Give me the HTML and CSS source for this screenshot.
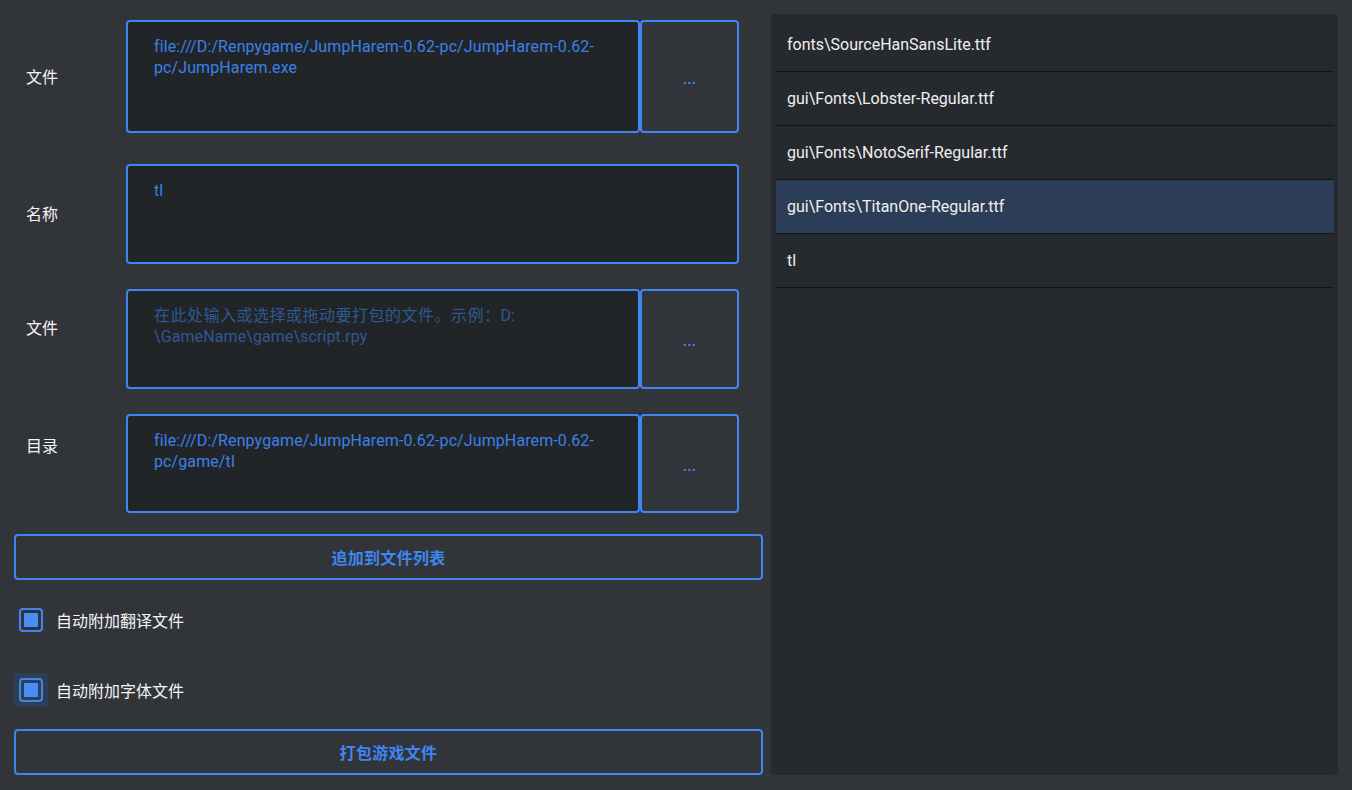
FILE: index.html
```html
<!DOCTYPE html>
<html lang="zh">
<head>
<meta charset="utf-8">
<title>打包</title>
<link rel="stylesheet" href="styles.css">
</head>
<body>
<div class="app">
  <div class="left">
    <div class="row row1">
      <div class="label lab1">文件</div>
      <div class="field tall">file:///D:/Renpygame/JumpHarem-0.62-pc/JumpHarem-0.62-pc/JumpHarem.exe</div>
      <div class="browse">...</div>
    </div>
    <div class="row row2">
      <div class="label lab2">名称</div>
      <div class="field full">tl</div>
    </div>
    <div class="row row3">
      <div class="label lab3">文件</div>
      <div class="field placeholder"><span class="cjk">在此处输入或选择或拖动要打包的文件。示例：</span>D:<br>\GameName\game\script.rpy</div>
      <div class="browse">...</div>
    </div>
    <div class="row row4">
      <div class="label lab4">目录</div>
      <div class="field">file:///D:/Renpygame/JumpHarem-0.62-pc/JumpHarem-0.62-pc/game/tl</div>
      <div class="browse">...</div>
    </div>
    <div class="action add">追加到文件列表</div>
    <div class="check cb1">
      <span class="boxwrap"><span class="box"><span class="fill"></span></span></span>
      <span class="ctext">自动附加翻译文件</span>
    </div>
    <div class="check cb2">
      <span class="boxwrap hover"><span class="box"><span class="fill"></span></span></span>
      <span class="ctext">自动附加字体文件</span>
    </div>
    <div class="action pack">打包游戏文件</div>
  </div>
  <div class="panel">
    <div class="item">fonts\SourceHanSansLite.ttf</div>
    <div class="item">gui\Fonts\Lobster-Regular.ttf</div>
    <div class="item">gui\Fonts\NotoSerif-Regular.ttf</div>
    <div class="item selected">gui\Fonts\TitanOne-Regular.ttf</div>
    <div class="item">tl</div>
  </div>
</div>
</body>
</html>
```

FILE: styles.css
```css
* { box-sizing: border-box; }
html, body {
  margin: 0;
  padding: 0;
  background: #313539;
  width: 1352px;
  height: 790px;
  overflow: hidden;
}
body {
  font-family: Roboto, "Noto Sans CJK SC", sans-serif;
  color: #e8e8e8;
}
.app {
  display: flex;
  gap: 8px;
  padding: 14px 14px 15px 14px;
  height: 790px;
}
.left {
  width: 749px;
  display: flex;
  flex-direction: column;
  padding-top: 6px;
}
.row {
  display: flex;
  align-items: flex-start;
}
.row1 { height: 113px; }
.row2 { height: 101px; margin-top: 31px; }
.row3 { height: 100px; margin-top: 25px; }
.row4 { height: 100px; margin-top: 25px; }
.label {
  width: 112px;
  padding-left: 12px;
  font-family: "Noto Sans CJK SC", sans-serif;
  font-size: 16px;
  line-height: 22px;
  color: #f4f4f4;
}
.lab1 { padding-top: 45px; }
.lab2 { padding-top: 38px; }
.lab3 { padding-top: 27px; }
.lab4 { padding-top: 20px; }
.field {
  width: 514px;
  height: 100%;
  background: #222528;
  border: 2px solid #3f86f2;
  border-radius: 4px;
  padding: 14px 26px;
  font-size: 16px;
  line-height: 21px;
  letter-spacing: 0.1px;
  color: #3b80ea;
  overflow-wrap: break-word;
}
.field.full { width: 613px; }
.field.placeholder { color: #2f5893; }
.cjk { letter-spacing: 0.5px; }
.browse {
  width: 99px;
  height: 100%;
  border: 2px solid #3f86f2;
  border-radius: 4px;
  display: flex;
  align-items: center;
  justify-content: center;
  color: #3f86f2;
  font-size: 16px;
  font-weight: 500;
  padding-top: 4px;
}
.action {
  height: 46px;
  border: 2px solid #3f86f2;
  border-radius: 4px;
  display: flex;
  align-items: center;
  justify-content: center;
  color: #3f86f2;
  font-family: "Noto Sans CJK SC", sans-serif;
  font-weight: 700;
  font-size: 16px;
  letter-spacing: 0.3px;
}
.add { margin-top: 21px; }
.pack { margin-top: 22px; }
.check {
  display: flex;
  align-items: center;
  height: 34px;
  gap: 8px;
}
.cb1 { margin-top: 23px; }
.cb2 { margin-top: 36px; }
.boxwrap {
  width: 34px;
  height: 34px;
  border-radius: 4px;
  display: flex;
  align-items: center;
  justify-content: center;
}
.boxwrap.hover { background: #2e3e55; }
.box {
  width: 24px;
  height: 24px;
  border: 2px solid #3f86f2;
  border-radius: 4px;
  display: flex;
  align-items: center;
  justify-content: center;
}
.fill {
  width: 14px;
  height: 14px;
  background: #4a8df7;
}
.ctext {
  font-family: "Noto Sans CJK SC", sans-serif;
  font-size: 16px;
  color: #f4f4f4;
}
.panel {
  width: 567px;
  height: 761px;
  background: #26292e;
  border-radius: 4px;
  padding: 4px 4px 0 5px;
}
.item {
  height: 54px;
  border-bottom: 1px solid #121417;
  padding-left: 11px;
  display: flex;
  align-items: center;
  font-size: 16px;
  color: #f0f0f0;
}
.item.selected { background: #2c3d57; }
```
